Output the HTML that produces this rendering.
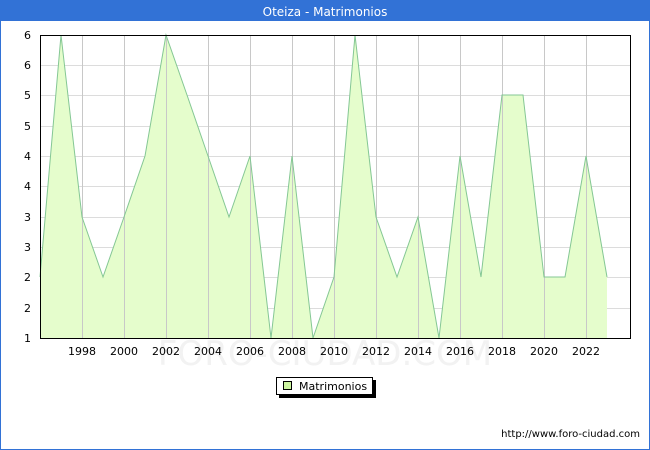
<!DOCTYPE html>
<html><head><meta charset="utf-8"><style>
html,body{margin:0;padding:0;background:#fff;}
body{width:650px;height:450px;position:relative;overflow:hidden;font-family:"DejaVu Sans","Liberation Sans",sans-serif;}
</style></head><body>
<svg width="650" height="450" xmlns="http://www.w3.org/2000/svg" style="position:absolute;left:0;top:0">
<rect x="0" y="0" width="650" height="450" fill="#3272d6"/>
<rect x="1" y="21" width="648" height="428" fill="#fff"/>
<text x="325" y="16" text-anchor="middle" fill="#fff" font-size="12" font-family="DejaVu Sans, sans-serif">Oteiza - Matrimonios</text>
<g stroke="#dcdcdc" stroke-width="1">
<line x1="40" y1="65.5" x2="631" y2="65.5"/><line x1="40" y1="95.5" x2="631" y2="95.5"/><line x1="40" y1="126.5" x2="631" y2="126.5"/><line x1="40" y1="156.5" x2="631" y2="156.5"/><line x1="40" y1="186.5" x2="631" y2="186.5"/><line x1="40" y1="217.5" x2="631" y2="217.5"/><line x1="40" y1="247.5" x2="631" y2="247.5"/><line x1="40" y1="277.5" x2="631" y2="277.5"/><line x1="40" y1="308.5" x2="631" y2="308.5"/>
</g>
<polygon fill="#e5fdcc" points="40,338 40,277 61,35 82,217 103,277 124,217 145,156 166,35 187,95 208,156 229,217 250,156 271,338 292,156 313,338 334,277 355,35 376,217 397,277 418,217 439,338 460,156 481,277 502,95 523,95 544,277 565,277 586,156 607,277 607,338"/>
<g stroke="#c8c8c8" stroke-width="1">
<line x1="82.5" y1="35" x2="82.5" y2="338"/><line x1="124.5" y1="35" x2="124.5" y2="338"/><line x1="166.5" y1="35" x2="166.5" y2="338"/><line x1="208.5" y1="35" x2="208.5" y2="338"/><line x1="250.5" y1="35" x2="250.5" y2="338"/><line x1="292.5" y1="35" x2="292.5" y2="338"/><line x1="334.5" y1="35" x2="334.5" y2="338"/><line x1="376.5" y1="35" x2="376.5" y2="338"/><line x1="418.5" y1="35" x2="418.5" y2="338"/><line x1="460.5" y1="35" x2="460.5" y2="338"/><line x1="502.5" y1="35" x2="502.5" y2="338"/><line x1="544.5" y1="35" x2="544.5" y2="338"/><line x1="586.5" y1="35" x2="586.5" y2="338"/>
</g>
<polyline fill="none" stroke="#84c794" stroke-width="1" points="40,277 61,35 82,217 103,277 124,217 145,156 166,35 187,95 208,156 229,217 250,156 271,338 292,156 313,338 334,277 355,35 376,217 397,277 418,217 439,338 460,156 481,277 502,95 523,95 544,277 565,277 586,156 607,277"/>
<rect x="40.5" y="35.5" width="590" height="303" fill="none" stroke="#000" stroke-width="1"/>
<text x="325" y="365" text-anchor="middle" fill="#f2f2f2" font-size="34" font-family="DejaVu Sans, sans-serif">FORO-CIUDAD.COM</text>
<g font-size="11" fill="#000" text-anchor="end" font-family="DejaVu Sans, sans-serif">
<text x="31" y="39">6</text><text x="31" y="69">6</text><text x="31" y="99">5</text><text x="31" y="130">5</text><text x="31" y="160">4</text><text x="31" y="190">4</text><text x="31" y="221">3</text><text x="31" y="251">3</text><text x="31" y="281">2</text><text x="31" y="312">2</text><text x="31" y="342">1</text>
</g>
<g font-size="11" fill="#000" text-anchor="middle" font-family="DejaVu Sans, sans-serif">
<text x="82" y="355">1998</text><text x="124" y="355">2000</text><text x="166" y="355">2002</text><text x="208" y="355">2004</text><text x="250" y="355">2006</text><text x="292" y="355">2008</text><text x="334" y="355">2010</text><text x="376" y="355">2012</text><text x="418" y="355">2014</text><text x="460" y="355">2016</text><text x="502" y="355">2018</text><text x="544" y="355">2020</text><text x="586" y="355">2022</text>
</g>
<rect x="279" y="380" width="97" height="18" fill="#000"/>
<rect x="276.5" y="377.5" width="96" height="17" fill="#fff" stroke="#000"/>
<rect x="283.5" y="381.5" width="8" height="8" fill="#ccf5a0" stroke="#000"/>
<text x="299" y="390" font-size="11" fill="#000" font-family="DejaVu Sans, sans-serif">Matrimonios</text>
<text x="640" y="437" text-anchor="end" font-size="10" fill="#000" font-family="DejaVu Sans, sans-serif">http://www.foro-ciudad.com</text>
</svg>
</body></html>
